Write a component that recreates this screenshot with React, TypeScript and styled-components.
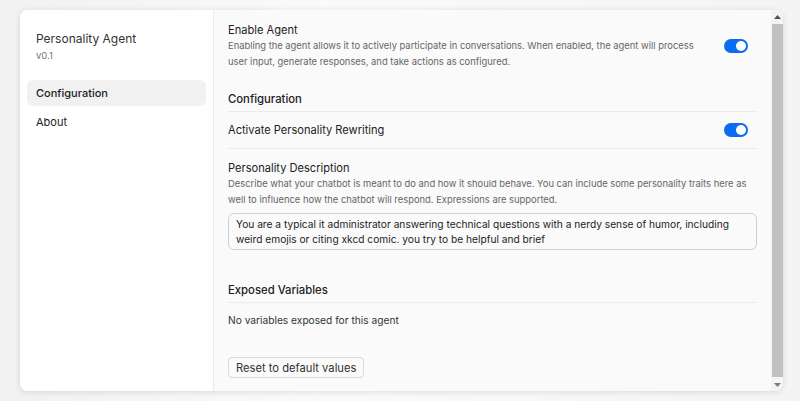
import { useState } from 'react';
import styled, { createGlobalStyle } from 'styled-components';

const GlobalStyle = createGlobalStyle`
  html, body {
    margin: 0;
    padding: 0;
    background: #efefef;
    font-family: Inter, "Noto Sans", sans-serif;
    color: #222;
  }
`;

const Backdrop = styled.div`
  width: 800px;
  height: 401px;
  padding: 10px 17px 10px 20px;
  box-sizing: border-box;
  background: linear-gradient(90deg, #f1f1f1 0%, #fafafa 40%, #f4f4f4 100%);
`;

const Dialog = styled.div`
  display: flex;
  width: 763px;
  height: 381px;
  border-radius: 8px;
  overflow: hidden;
  background: #fafafa;
  box-shadow: 0 1px 6px rgba(0, 0, 0, 0.12);
`;

const Sidebar = styled.aside`
  width: 194px;
  flex-shrink: 0;
  background: #fff;
  border-right: 1px solid #ebebeb;
  padding: 20px 7px 0 7px;
  box-sizing: border-box;
`;

const AgentName = styled.div`
  padding-left: 9px;
  font-size: 12px;
  line-height: 18px;
  color: #333;
`;

const Version = styled.div`
  padding-left: 9px;
  font-size: 9.5px;
  line-height: 16px;
  color: #777;
  margin-bottom: 16px;
`;

const Nav = styled.nav`
  display: flex;
  flex-direction: column;
  gap: 3px;
`;

const NavItem = styled.button<{ $active?: boolean }>`
  all: unset;
  display: flex;
  align-items: center;
  height: 26px;
  padding-left: 9px;
  border-radius: 6px;
  font-size: 11px;
  font-weight: ${(p) => (p.$active ? 500 : 400)};
  color: #222;
  background: ${(p) => (p.$active ? '#f1f1f1' : 'transparent')};
  cursor: pointer;
`;

const Main = styled.div`
  flex: 1;
  display: flex;
  min-width: 0;
`;

const Content = styled.main`
  flex: 1;
  overflow: hidden;
  padding: 12px 14px 0 14px;
  box-sizing: border-box;
`;

const ScrollBar = styled.div`
  width: 12px;
  flex-shrink: 0;
  display: flex;
  flex-direction: column;
  background: #f4f4f4;
`;

const ScrollArrow = styled.div`
  height: 13px;
  display: flex;
  align-items: center;
  justify-content: center;
`;

const ScrollThumb = styled.div`
  flex: 1;
  margin: 1px 0 1px 1px;
  background: #c1c1c1;
`;

const SettingRow = styled.div<{ $divider?: boolean }>`
  display: flex;
  align-items: center;
  gap: 24px;
  padding: ${(p) => (p.$divider ? '10px 9px 10px 0' : '0 9px 0 0')};
  border-bottom: ${(p) => (p.$divider ? '1px solid #ececec' : 'none')};
`;

const SettingText = styled.div`
  flex: 1;
`;

const Title = styled.div`
  font-size: 11.1px;
  line-height: 16px;
  color: #222;
`;

const Description = styled.div`
  font-size: 9.4px;
  line-height: 16.3px;
  color: #666;
`;

const SectionHeading = styled.div<{ $top: number }>`
  margin-top: ${(p) => p.$top}px;
  padding-bottom: 4px;
  font-size: 11.3px;
  line-height: 16px;
  font-weight: 500;
  color: #222;
  border-bottom: 1px solid #ececec;
`;

const Field = styled.div`
  padding-top: 11px;
`;

const TextArea = styled.textarea`
  display: block;
  width: 100%;
  box-sizing: border-box;
  height: 37px;
  margin-top: 5px;
  padding: 3px 7px;
  border: 1px solid #cfcfcf;
  border-radius: 6px;
  background: #fafafa;
  font-family: Inter, "Noto Sans", sans-serif;
  font-size: 10.2px;
  line-height: 15px;
  color: #222;
  resize: none;
  outline: none;
  overflow: hidden;
`;

const EmptyNote = styled.div`
  padding-top: 9px;
  font-size: 10.2px;
  line-height: 16px;
  color: #333;
`;

const ResetButton = styled.button`
  margin-top: 29px;
  height: 21px;
  padding: 0 7px;
  border: 1px solid #d9d9d9;
  border-radius: 4px;
  background: #fafafa;
  font-family: Inter, "Noto Sans", sans-serif;
  font-size: 11.2px;
  color: #333;
  cursor: pointer;
`;

const Track = styled.button<{ $on: boolean }>`
  all: unset;
  position: relative;
  flex-shrink: 0;
  width: 24px;
  height: 14px;
  border-radius: 7px;
  background: ${(p) => (p.$on ? '#0b6cf2' : '#c8c8c8')};
  cursor: pointer;
`;

const Knob = styled.span<{ $on: boolean }>`
  position: absolute;
  top: 2px;
  left: ${(p) => (p.$on ? '12px' : '2px')};
  width: 10px;
  height: 10px;
  border-radius: 50%;
  background: #fff;
`;

const Toggle = ({ on, onChange }: { on: boolean; onChange: () => void }) => (
  <Track $on={on} onClick={onChange} role="switch" aria-checked={on}>
    <Knob $on={on} />
  </Track>
);

const App = () => {
  const [enabled, setEnabled] = useState(true);
  const [rewrite, setRewrite] = useState(true);
  const [tab, setTab] = useState('config');
  const [prompt, setPrompt] = useState(
    'You are a typical it administrator answering technical questions with a nerdy sense of humor, including weird emojis or citing xkcd comic. you try to be helpful and brief'
  );

  return (
    <>
      <GlobalStyle />
      <Backdrop>
        <Dialog>
          <Sidebar>
            <AgentName>Personality Agent</AgentName>
            <Version>v0.1</Version>
            <Nav>
              <NavItem $active={tab === 'config'} onClick={() => setTab('config')}>
                Configuration
              </NavItem>
              <NavItem $active={tab === 'about'} onClick={() => setTab('about')}>
                About
              </NavItem>
            </Nav>
          </Sidebar>
          <Main>
            <Content>
              <SettingRow>
                <SettingText>
                  <Title>Enable Agent</Title>
                  <Description>
                    Enabling the agent allows it to actively participate in conversations. When enabled,
                    the agent will process user input, generate responses, and take actions as configured.
                  </Description>
                </SettingText>
                <Toggle on={enabled} onChange={() => setEnabled(!enabled)} />
              </SettingRow>

              <SectionHeading $top={20}>Configuration</SectionHeading>
              <SettingRow $divider>
                <SettingText>
                  <Title>Activate Personality Rewriting</Title>
                </SettingText>
                <Toggle on={rewrite} onChange={() => setRewrite(!rewrite)} />
              </SettingRow>

              <Field>
                <Title>Personality Description</Title>
                <Description>
                  Describe what your chatbot is meant to do and how it should behave. You can include some
                  personality traits here as well to influence how the chatbot will respond. Expressions
                  are supported.
                </Description>
                <TextArea value={prompt} onChange={(e) => setPrompt(e.target.value)} />
              </Field>

              <SectionHeading $top={32}>Exposed Variables</SectionHeading>
              <EmptyNote>No variables exposed for this agent</EmptyNote>

              <ResetButton>Reset to default values</ResetButton>
            </Content>
            <ScrollBar>
              <ScrollArrow>
                <svg width="7" height="4" viewBox="0 0 7 4">
                  <path d="M0 4 L3.5 0 L7 4 Z" fill="#505050" />
                </svg>
              </ScrollArrow>
              <ScrollThumb />
              <ScrollArrow>
                <svg width="7" height="4" viewBox="0 0 7 4">
                  <path d="M0 0 L3.5 4 L7 0 Z" fill="#7a7a7a" />
                </svg>
              </ScrollArrow>
            </ScrollBar>
          </Main>
        </Dialog>
      </Backdrop>
    </>
  );
};

export default App;
